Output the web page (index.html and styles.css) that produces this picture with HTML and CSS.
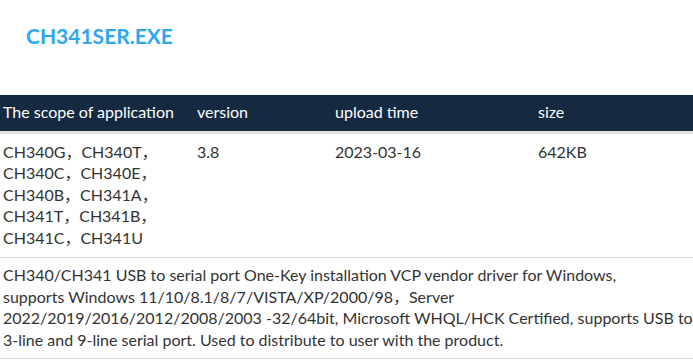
FILE: index.html
```html
<!DOCTYPE html>
<html>
<head>
<meta charset="utf-8">
<link rel="stylesheet" href="styles.css">
</head>
<body>
<div class="page">
  <h1 class="title">CH341SER.EXE</h1>
  <table class="files">
    <thead>
      <tr>
        <th class="c1">The scope of application</th>
        <th class="c2">version</th>
        <th class="c3">upload time</th>
        <th class="c4">size</th>
      </tr>
    </thead>
    <tbody>
      <tr class="data">
        <td class="c1">CH340G，CH340T，CH340C，CH340E，CH340B，CH341A，CH341T，CH341B，CH341C，CH341U</td>
        <td class="c2">3.8</td>
        <td class="c3">2023-03-16</td>
        <td class="c4">642KB</td>
      </tr>
      <tr class="desc">
        <td colspan="4">CH340/CH341 USB to serial port One-Key installation VCP vendor driver for Windows,<br>supports Windows 11/10/8.1/8/7/VISTA/XP/2000/98，Server 2022/2019/2016/2012/2008/2003 -32/64bit, Microsoft WHQL/HCK Certified, supports USB to 3-line and 9-line serial port. Used to distribute to user with the product.</td>
      </tr>
    </tbody>
  </table>
</div>
</body>
</html>
```
FILE: styles.css
```css
html, body {
  margin: 0;
  padding: 0;
  background: #fff;
}
body {
  font-family: "Lato", "Noto Sans CJK SC", sans-serif;
  color: #333;
}
.page {
  width: 693px;
}
.title {
  margin: 0;
  padding: 23px 0 0 26px;
  height: 95px;
  box-sizing: border-box;
  font-size: 21px;
  font-weight: bold;
  color: #2ea7f0;
  line-height: 26px;
}
.files {
  width: 100%;
  border-collapse: collapse;
  table-layout: fixed;
  font-size: 16px;
  line-height: 21.5px;
}
.files thead tr {
  background: #152a40;
  color: #fff;
  border-bottom: 3px solid #e3e3e3;
}
.files th {
  text-align: left;
  font-weight: normal;
  height: 37px;
  box-sizing: border-box;
  padding: 6px 3px 0;
  vertical-align: top;
}
.c1 { width: 194px; }
.c2 { width: 138px; }
.c3 { width: 203px; }
.files td {
  vertical-align: top;
  padding: 0 3px;
}
.data td {
  padding-top: 7px;
  padding-bottom: 9px;
}
.data .c1 {
  padding-right: 30px;
}
.desc td {
  border-top: 1px solid #ddd;
  border-bottom: 1px solid #ddd;
  padding: 6px 0 8px 3px;
}
```
